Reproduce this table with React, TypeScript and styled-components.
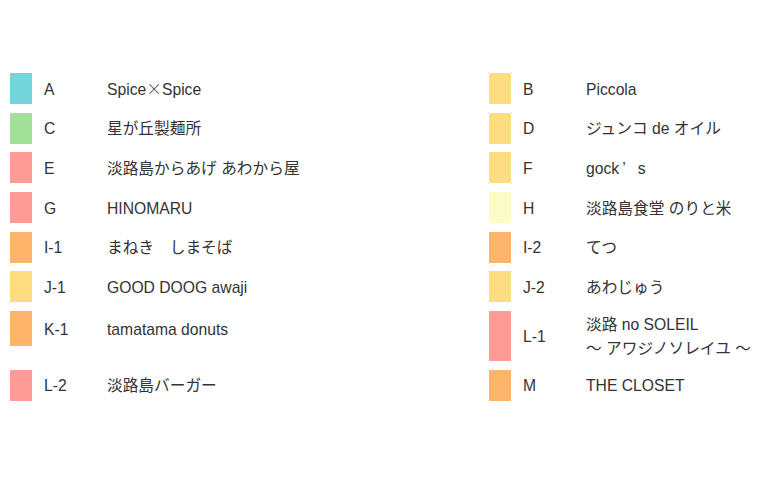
import React from 'react';
import styled, { createGlobalStyle } from 'styled-components';

const GlobalStyle = createGlobalStyle`
  html, body {
    margin: 0;
    padding: 0;
    background: #ffffff;
  }
  body {
    font-family: "Liberation Sans", "Noto Sans CJK JP", sans-serif;
    color: #333333;
  }
`;

const Legend = styled.div`
  display: grid;
  grid-template-columns: 479px 1fr;
  row-gap: 8.7px;
  align-items: start;
  align-content: start;
  padding: 73px 0 0 10px;
  width: 760px;
  height: 480px;
  box-sizing: border-box;
`;

const Row = styled.div`
  display: flex;
  align-items: center;
`;

const Swatch = styled.span<{ $color: string; $height: number }>`
  flex: none;
  width: 22px;
  height: ${({ $height }) => $height}px;
  background: ${({ $color }) => $color};
  margin-right: 12px;
`;

const Label = styled.span`
  flex: none;
  width: 63px;
  padding-top: 2px;
  font-size: 15.7px;
  line-height: 20px;
`;

const Name = styled.span`
  padding-top: 2px;
  font-size: 15.7px;
  line-height: 24px;
  white-space: nowrap;
`;

const Wide = styled.span`
  font-family: "Noto Sans CJK JP", sans-serif;
  font-weight: 300;
`;

const Quote = styled.span`
  margin: 0 12px 0 3px;
`;

const colors = {
  teal: '#74d5dc',
  green: '#a3e19a',
  pink: '#fd9b94',
  orange: '#fdb36a',
  yellow: '#fedd82',
  pale: '#fdfbc6',
};

type Entry = { label: string; color: string; name: React.ReactNode; height?: number };

const entries: Entry[] = [
  { label: 'A', color: colors.teal, name: <>Spice<Wide>×</Wide>Spice</> },
  { label: 'B', color: colors.yellow, name: 'Piccola' },
  { label: 'C', color: colors.green, name: '星が丘製麺所' },
  { label: 'D', color: colors.yellow, name: 'ジュンコ de オイル' },
  { label: 'E', color: colors.pink, name: '淡路島からあげ あわから屋' },
  { label: 'F', color: colors.yellow, name: <>gock<Quote>’</Quote>s</> },
  { label: 'G', color: colors.pink, name: 'HINOMARU' },
  { label: 'H', color: colors.pale, name: '淡路島食堂 のりと米' },
  { label: 'I-1', color: colors.orange, name: 'まねき　しまそば' },
  { label: 'I-2', color: colors.orange, name: 'てつ' },
  { label: 'J-1', color: colors.yellow, name: 'GOOD DOOG awaji' },
  { label: 'J-2', color: colors.yellow, name: 'あわじゅう' },
  { label: 'K-1', color: colors.orange, name: 'tamatama donuts', height: 35 },
  {
    label: 'L-1',
    color: colors.pink,
    name: (
      <>
        淡路 no SOLEIL
        <br />
        ～ アワジノソレイユ ～
      </>
    ),
    height: 50,
  },
  { label: 'L-2', color: colors.pink, name: '淡路島バーガー' },
  { label: 'M', color: colors.orange, name: 'THE CLOSET' },
];

export default function App() {
  return (
    <>
      <GlobalStyle />
      <Legend>
        {entries.map(e => (
          <Row key={e.label}>
            <Swatch $color={e.color} $height={e.height ?? 31} />
            <Label>{e.label}</Label>
            <Name>{e.name}</Name>
          </Row>
        ))}
      </Legend>
    </>
  );
}
